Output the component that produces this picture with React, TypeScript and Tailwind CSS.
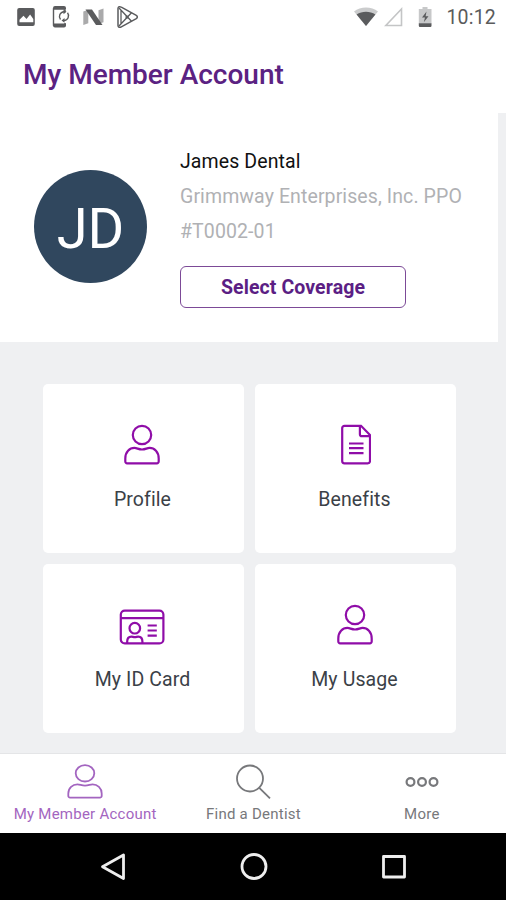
import type { ReactNode } from "react";
import clsx from "clsx";

function PersonIcon({ className }: { className?: string }) {
  return (
    <svg width="36" height="42" viewBox="0 0 36 42" fill="none" stroke="currentColor" className={className}>
      <circle cx="18" cy="11" r="9.2" />
      <path d="M3.2 39.3a1.8 1.8 0 0 1-1.9-1.9v-3C1.3 28 5.6 23.9 10.4 23.9c2.7 0 4 1.6 7.6 1.6s4.9-1.6 7.6-1.6c4.8 0 9.1 4.1 9.1 10.5v3a1.8 1.8 0 0 1-1.9 1.9z" />
    </svg>
  );
}

function DocumentIcon({ className }: { className?: string }) {
  return (
    <svg width="30" height="42" viewBox="0 0 30 42" fill="none" stroke="currentColor" className={className}>
      <path d="M3.5 1.8H20l9 9.2v26a2.3 2.3 0 0 1-2.3 2.3H3.5A2.3 2.3 0 0 1 1.2 37V4.1a2.3 2.3 0 0 1 2.3-2.3z" />
      <path d="M18.9 2v8.2a2 2 0 0 0 2 2H29" />
      <path d="M8 19.5h14.5M8 24.2h14.5M8 29.2h14.5" />
    </svg>
  );
}

function IdCardIcon({ className }: { className?: string }) {
  return (
    <svg width="46" height="42" viewBox="0 0 46 42" fill="none" stroke="currentColor" className={className}>
      <rect x="1.8" y="6.6" width="42.6" height="32.8" rx="4" />
      <path d="M2 14.2h42" />
      <circle cx="15.8" cy="24.2" r="5.3" />
      <path d="M8.2 39v-1.5c0-3 1.8-4.9 4.2-4.9 1.3 0 1.8.5 3.4.5s2.1-.5 3.4-.5c2.4 0 4.2 1.9 4.2 4.9V39" />
      <path d="M28.6 21.5h9.2M28.6 26.5h9.2M28.6 31.7h9.2" />
    </svg>
  );
}

function StatusBar() {
  return (
    <div className="flex h-[34px] items-center pl-[14px] pr-[10px] text-[#5a5b5d]">
      <svg width="24" height="34" viewBox="0 0 24 34" className="mr-[11px]">
        <rect x="3.2" y="8" width="17.6" height="18" rx="2" fill="currentColor" />
        <path d="M5.5 22.3v-2.6l4-4 3 3.4 3.6-4.6 3.2 4.4v3.4z" fill="#fff" />
      </svg>
      <svg width="24" height="34" viewBox="0 0 24 34" fill="none" stroke="currentColor" className="mr-[9px]">
        <path d="M16 11V9H4.5v16H16v-2" strokeWidth="1.4" />
        <path d="M6 6h9a2 2 0 0 1 2 2v1H4V8a2 2 0 0 1 2-2zM4 23.5h13v2a2 2 0 0 1-2 2H6a2 2 0 0 1-2-2z" fill="currentColor" stroke="none" />
        <path d="M11.5 19.5a4.8 4.8 0 0 1 3.5-7.8M18.5 12.7a4.8 4.8 0 0 1-3.5 7.8" strokeWidth="1.4" />
        <path d="M14.5 9.3l3 2.5-3 2.4zM15.5 18l-3 2.4 3 2.4z" fill="currentColor" stroke="none" />
      </svg>
      <svg width="24" height="34" viewBox="0 0 24 34" className="mr-[10px]">
        <path d="M1.3 11.5l5-1.8v13.5l-5 1.8zM16.5 10.3l5-1.8v13.8l-5 1.8z" fill="#aaaaab" />
        <path d="M3.5 9.5H10L20.5 25H14z" fill="currentColor" />
      </svg>
      <svg width="24" height="34" viewBox="0 0 24 34" fill="none" stroke="currentColor" strokeWidth="1.5" strokeLinejoin="round">
        <path d="M2 8.5c0-2 1.7-2.3 3.3-1.3l15 8.2c1.4.9 1.4 2.3 0 3.2l-15 8.2C3.7 27.8 2 27.3 2 25.5z" />
        <path d="M3 26l12.5-13.3M3 8l12.5 13.3M5 10v14" strokeWidth="1.3" />
        <circle cx="11" cy="17" r="1.6" fill="currentColor" stroke="none" />
      </svg>
      <svg width="24" height="34" viewBox="0 0 24 34" className="ml-auto mr-[6px]">
        <path d="M0 11.5C6.5 6 17.5 6 24 11.5L12 26z" fill="#cbcccd" />
        <path d="M2.6 14.5c5.5-3.6 13.3-3.6 18.8 0L12 26z" fill="currentColor" />
      </svg>
      <svg width="22" height="34" viewBox="0 0 22 34" className="mr-[12px]">
        <path d="M1.8 25.5h15.7V9z" fill="none" stroke="#c4c5c6" strokeWidth="1.6" />
      </svg>
      <svg width="14" height="34" viewBox="0 0 14 34" className="mr-[14px]">
        <path d="M4.5 7h5v2h4v14.5H.8V9h3.7z" fill="#c7c8c9" />
        <path d="M.8 23.2h12.7v2.5a1.2 1.2 0 0 1-1.2 1.2H2A1.2 1.2 0 0 1 .8 25.7zM8.5 11.5l-4.5 6h3l-1.2 4.7 4.7-6H7.6z" fill="currentColor" />
      </svg>
      <span className="pt-[2px] text-[19.5px] tracking-[0.2px] text-[#5a5b5c]">10:12</span>
    </div>
  );
}

function Card({ label, children }: { label: string; children: ReactNode }) {
  return (
    <button className="flex h-[169px] flex-col items-center rounded-[5px] bg-white pr-[2px] pt-[40px] text-[#8f0da8]">
      {children}
      <span className="mt-[22px] text-[19.5px] leading-[24px] tracking-[0.1px] text-[#3b4147]">{label}</span>
    </button>
  );
}

function Tab({ label, active, children }: { label: string; active?: boolean; children: ReactNode }) {
  return (
    <button
      className={clsx(
        "flex flex-1 flex-col items-center pt-[10px]",
        active ? "text-[#a365c0]" : "text-[#77787b]"
      )}
    >
      <span className="flex h-[38px] items-start">{children}</span>
      <span className="mt-[2px] text-[15px] leading-[20px] tracking-[0.25px]">{label}</span>
    </button>
  );
}

export default function App() {
  return (
    <div className="flex h-[900px] w-[506px] flex-col overflow-hidden bg-[#eff0f2] font-['Roboto',sans-serif]">
      <header className="h-[113px] bg-white">
        <StatusBar />
        <h1 className="pl-[23px] pt-[23px] text-[28px] font-medium leading-[36px] text-[#5b2282]">My Member Account</h1>
      </header>

      <section className="flex h-[229px] w-[498px] bg-white pl-[34px]">
        <div className="mt-[57px] flex size-[113px] items-center justify-center rounded-full bg-[#30475e] pt-[4px] text-[56px] text-white">
          JD
        </div>
        <div className="ml-[33px] pt-[31px] text-[19.5px] leading-[35px] tracking-[0.1px]">
          <p className="text-[#111]">James Dental</p>
          <p className="whitespace-nowrap text-[#b0b1b4]">Grimmway Enterprises, Inc. PPO</p>
          <p className="text-[#b0b1b4]">#T0002-01</p>
          <button className="mt-[17px] block h-[42px] w-[226px] rounded-[6px] border-[1.5px] border-[#7c4a97] pt-px font-bold leading-[39px] text-[#5b1e84]">
            Select Coverage
          </button>
        </div>
      </section>

      <main className="grid grid-cols-2 gap-[11px] pl-[43px] pr-[50px] pt-[42px]">
        <Card label="Profile">
          <PersonIcon className="mr-px stroke-[2.2]" />
        </Card>
        <Card label="Benefits">
          <DocumentIcon className="ml-[2px] stroke-[2.2]" />
        </Card>
        <Card label="My ID Card">
          <IdCardIcon className="mr-px stroke-[2.2]" />
        </Card>
        <Card label="My Usage">
          <PersonIcon className="stroke-[2.2]" />
        </Card>
      </main>

      <nav className="mt-auto flex h-[80px] border-t border-[#e4e5e7] bg-white pl-px">
        <Tab label="My Member Account" active>
          <svg width="36" height="36" viewBox="0 0 36 36" fill="none" stroke="currentColor" strokeWidth="1.8">
            <ellipse cx="18" cy="9.3" rx="9.3" ry="8.2" />
            <path d="M3.2 33.6a1.7 1.7 0 0 1-1.9-1.7v-2.5c0-5.4 4.3-9.1 9.1-9.1 2.7 0 4 1.4 7.6 1.4s4.9-1.4 7.6-1.4c4.8 0 9.1 3.7 9.1 9.1v2.5a1.7 1.7 0 0 1-1.9 1.7z" />
          </svg>
        </Tab>
        <Tab label="Find a Dentist">
          <svg width="36" height="36" viewBox="0 0 36 36" fill="none" stroke="currentColor" strokeWidth="1.8">
            <circle cx="15" cy="14.5" r="13" />
            <path d="M24.3 23.8L35 34.3" />
          </svg>
        </Tab>
        <Tab label="More">
          <svg width="36" height="36" viewBox="0 0 36 36" fill="none" stroke="currentColor" strokeWidth="2.2">
            <circle cx="6.5" cy="18" r="3.9" />
            <circle cx="18" cy="18" r="3.9" />
            <circle cx="29.5" cy="18" r="3.9" />
          </svg>
        </Tab>
      </nav>

      <footer className="flex h-[67px] shrink-0 items-center justify-center gap-[112px] bg-black pl-px text-[#eee]">
        <svg width="28" height="28" viewBox="0 0 28 28" fill="none" stroke="currentColor" strokeWidth="2.8" strokeLinejoin="round">
          <path d="M23.5 2v23.5L2.5 13.8z" />
        </svg>
        <svg width="28" height="28" viewBox="0 0 28 28" fill="none" stroke="currentColor" strokeWidth="2.8">
          <circle cx="14" cy="13.5" r="12" />
        </svg>
        <svg width="28" height="28" viewBox="0 0 28 28" fill="none" stroke="currentColor" strokeWidth="2.8" strokeLinejoin="round">
          <rect x="3.5" y="3.5" width="21" height="20.5" />
        </svg>
      </footer>
    </div>
  );
}
